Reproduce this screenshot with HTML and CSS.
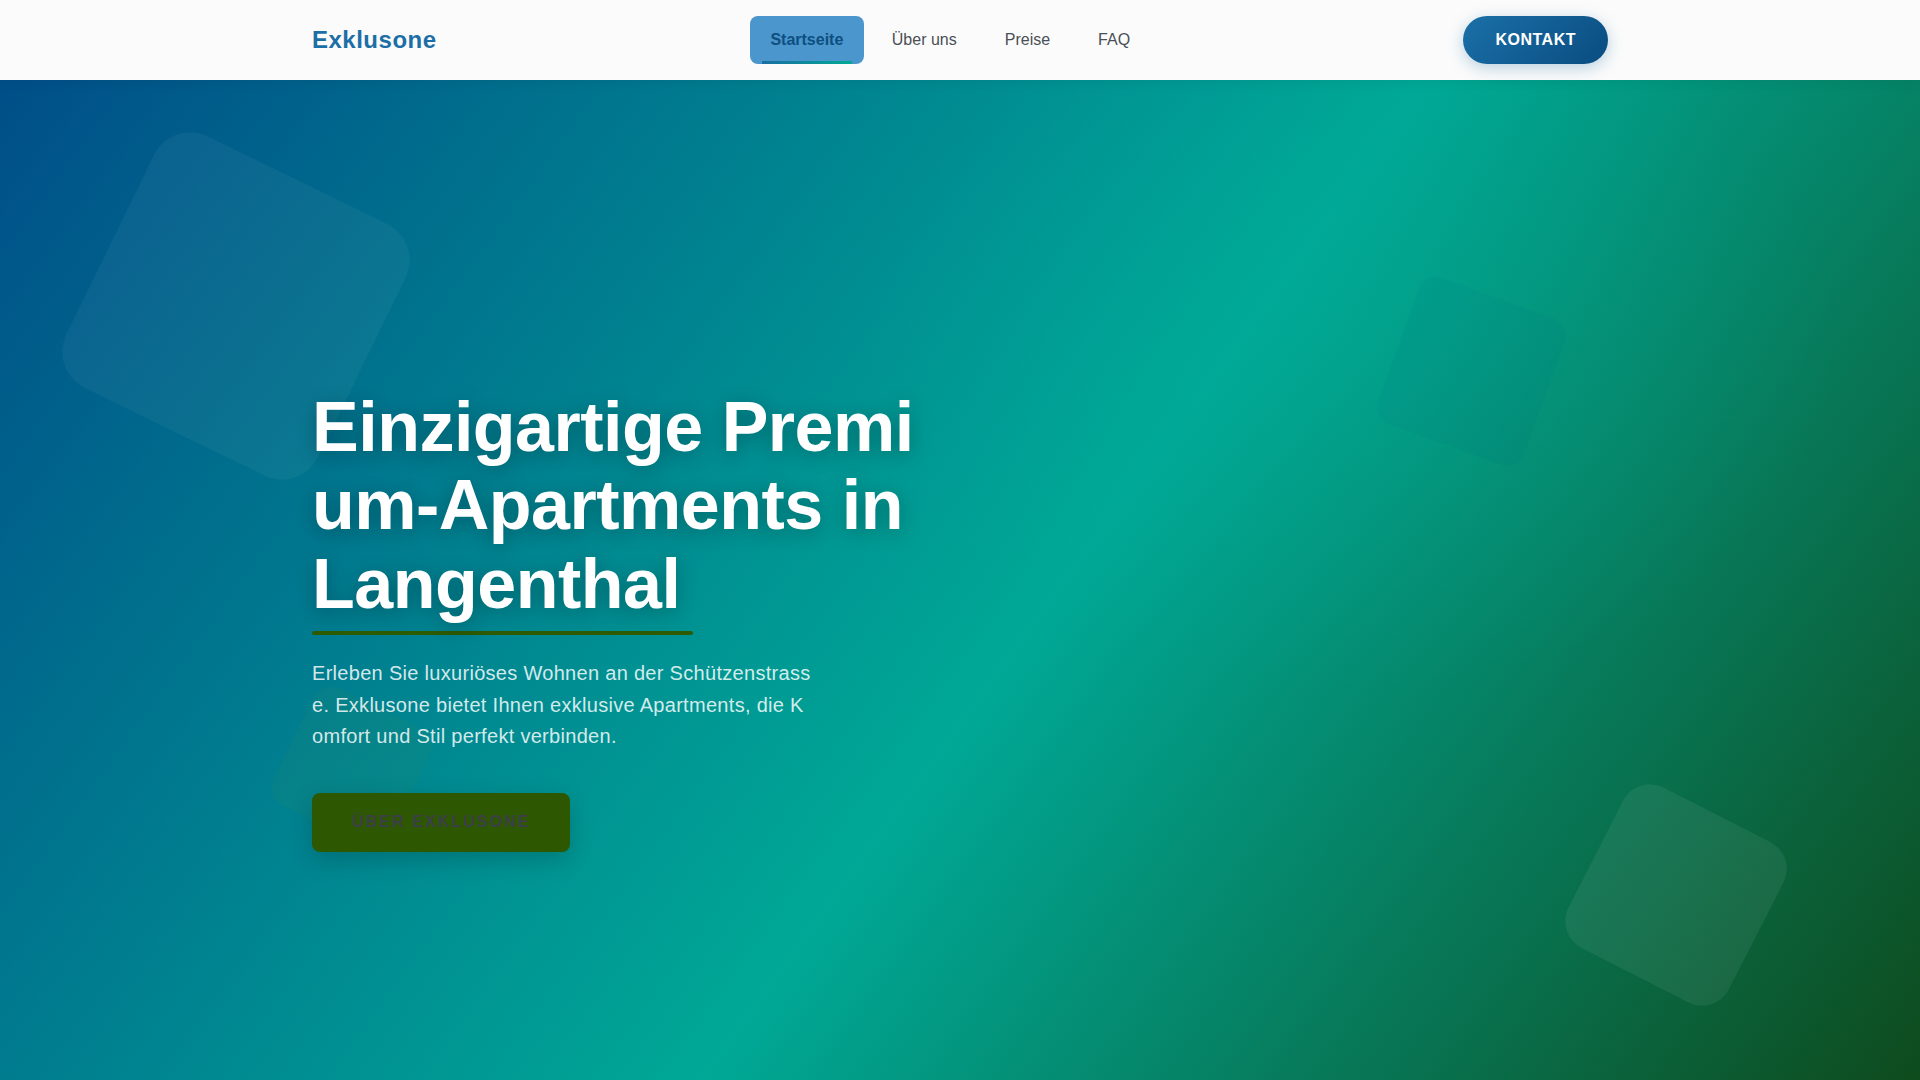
FILE: index.html
```html
<!DOCTYPE html>
<html lang="de">
<head>
<meta charset="utf-8">
<title>Exklusone – Premium-Apartments in Langenthal</title>
<link rel="stylesheet" href="styles.css">
</head>
<body>
<header class="site-header">
  <div class="container header-inner">
    <a class="logo" href="#">Exklusone</a>
    <nav class="main-nav">
      <a class="nav-link active" href="#">Startseite</a>
      <a class="nav-link" href="#">Über uns</a>
      <a class="nav-link" href="#">Preise</a>
      <a class="nav-link" href="#">FAQ</a>
    </nav>
    <a class="btn-contact" href="#">KONTAKT</a>
  </div>
</header>
<main>
  <section class="hero">
    <div class="shape shape-1"></div>
    <div class="shape shape-2"></div>
    <div class="shape shape-3"></div>
    <div class="shape shape-4"></div>
    <div class="container hero-inner">
      <div class="hero-text">
        <h1 class="hero-title">Einzigartige Premium-Apartments in Langenthal</h1>
        <div class="hero-rule"></div>
        <p class="hero-lead">Erleben Sie luxuriöses Wohnen an der Schützenstrasse. Exklusone bietet Ihnen exklusive Apartments, die Komfort und Stil perfekt verbinden.</p>
        <a class="btn-about" href="#">Über Exklusone</a>
      </div>
    </div>
  </section>
</main>
</body>
</html>
```
FILE: styles.css
```css
* { box-sizing: border-box; }

html, body {
  margin: 0;
  padding: 0;
}

body {
  font-family: "Liberation Sans", Arial, sans-serif;
  background: #0a6f80;
  overflow: hidden;
}

a { text-decoration: none; }

.container {
  width: 1296px;
  margin: 0 auto;
}

/* Header */
.site-header {
  position: relative;
  z-index: 10;
  height: 80px;
  background: #fbfbfb;
  box-shadow: 0 2px 12px rgba(0, 0, 0, 0.06);
}

.header-inner {
  height: 80px;
  display: flex;
  align-items: center;
  justify-content: space-between;
}

.logo {
  font-size: 24px;
  font-weight: 700;
  letter-spacing: 0.5px;
  color: #1b6fa6;
  line-height: 1;
}

.main-nav {
  display: flex;
  gap: 8px;
  align-items: center;
}

.nav-link {
  position: relative;
  display: block;
  padding: 12px 20px;
  font-size: 16px;
  line-height: 24px;
  color: #4a4f55;
  border-radius: 8px;
}

.nav-link.active {
  background: #4b96cd;
  color: #0d4f80;
  font-weight: 700;
  padding: 12px 20.5px;
}

.nav-link.active::after {
  content: "";
  position: absolute;
  left: 12px;
  right: 12px;
  bottom: 0;
  height: 3px;
  background: linear-gradient(90deg, #1a6fa3, #00a896);
}

.btn-contact {
  display: flex;
  align-items: center;
  height: 48px;
  padding: 0 32px;
  border-radius: 30px;
  background: linear-gradient(135deg, #1a70a8 0%, #0a4c80 100%);
  color: #ffffff;
  font-size: 16px;
  font-weight: 700;
  letter-spacing: 0.5px;
  box-shadow: 0 4px 16px rgba(26, 111, 163, 0.3);
}

/* Hero */
.hero {
  position: relative;
  min-height: 1000px;
  overflow: hidden;
  background:
    radial-gradient(ellipse 700px 500px at 1350px 260px, rgba(0, 178, 156, 0.22), rgba(0, 178, 156, 0) 70%),
    linear-gradient(126deg, #004e88 0%, #00a896 54%, #0e4b1d 100%);
}

.shape {
  position: absolute;
}

.shape-1 {
  left: 96px;
  top: 86px;
  width: 280px;
  height: 280px;
  border-radius: 40px;
  transform: rotate(26deg);
  background: rgba(255, 255, 255, 0.045);
}

.shape-2 {
  left: 1394px;
  top: 214px;
  width: 155px;
  height: 155px;
  border-radius: 18px;
  transform: rotate(20deg);
  background: rgba(0, 78, 137, 0.05);
}

.shape-3 {
  left: 1586px;
  top: 725px;
  width: 180px;
  height: 180px;
  border-radius: 30px;
  transform: rotate(27deg);
  background: rgba(255, 255, 255, 0.065);
}

.shape-4 {
  left: 287px;
  top: 622px;
  width: 130px;
  height: 130px;
  border-radius: 20px;
  transform: rotate(26deg);
  background: rgba(46, 139, 87, 0.12);
}

.hero-inner {
  position: relative;
  z-index: 2;
  padding-top: 308px;
}

.hero-text {
  width: 624px;
}

.hero-title {
  margin: 0;
  font-size: 70px;
  line-height: 78.4px;
  font-weight: 700;
  letter-spacing: -0.5px;
  color: #ffffff;
  word-break: break-all;
  text-shadow: 0 4px 20px rgba(0, 0, 0, 0.28);
}

.hero-rule {
  width: 381px;
  height: 4px;
  margin-top: 8px;
  border-radius: 2px;
  background: #2e5a02;
}

.hero-lead {
  margin: 23px 0 0;
  max-width: 500px;
  font-size: 20px;
  line-height: 31.4px;
  letter-spacing: 0.3px;
  color: rgba(255, 255, 255, 0.84);
  word-break: break-all;
}

.btn-about {
  display: inline-block;
  margin-top: 41px;
  padding: 20px 39px 20px 40px;
  border-radius: 8px;
  background: #2d5700;
  color: #3c3f4a;
  font-size: 16px;
  line-height: 18.4px;
  font-weight: 700;
  letter-spacing: 2.1px;
  text-transform: uppercase;
  box-shadow: 0 8px 24px rgba(0, 0, 0, 0.18);
}
```
